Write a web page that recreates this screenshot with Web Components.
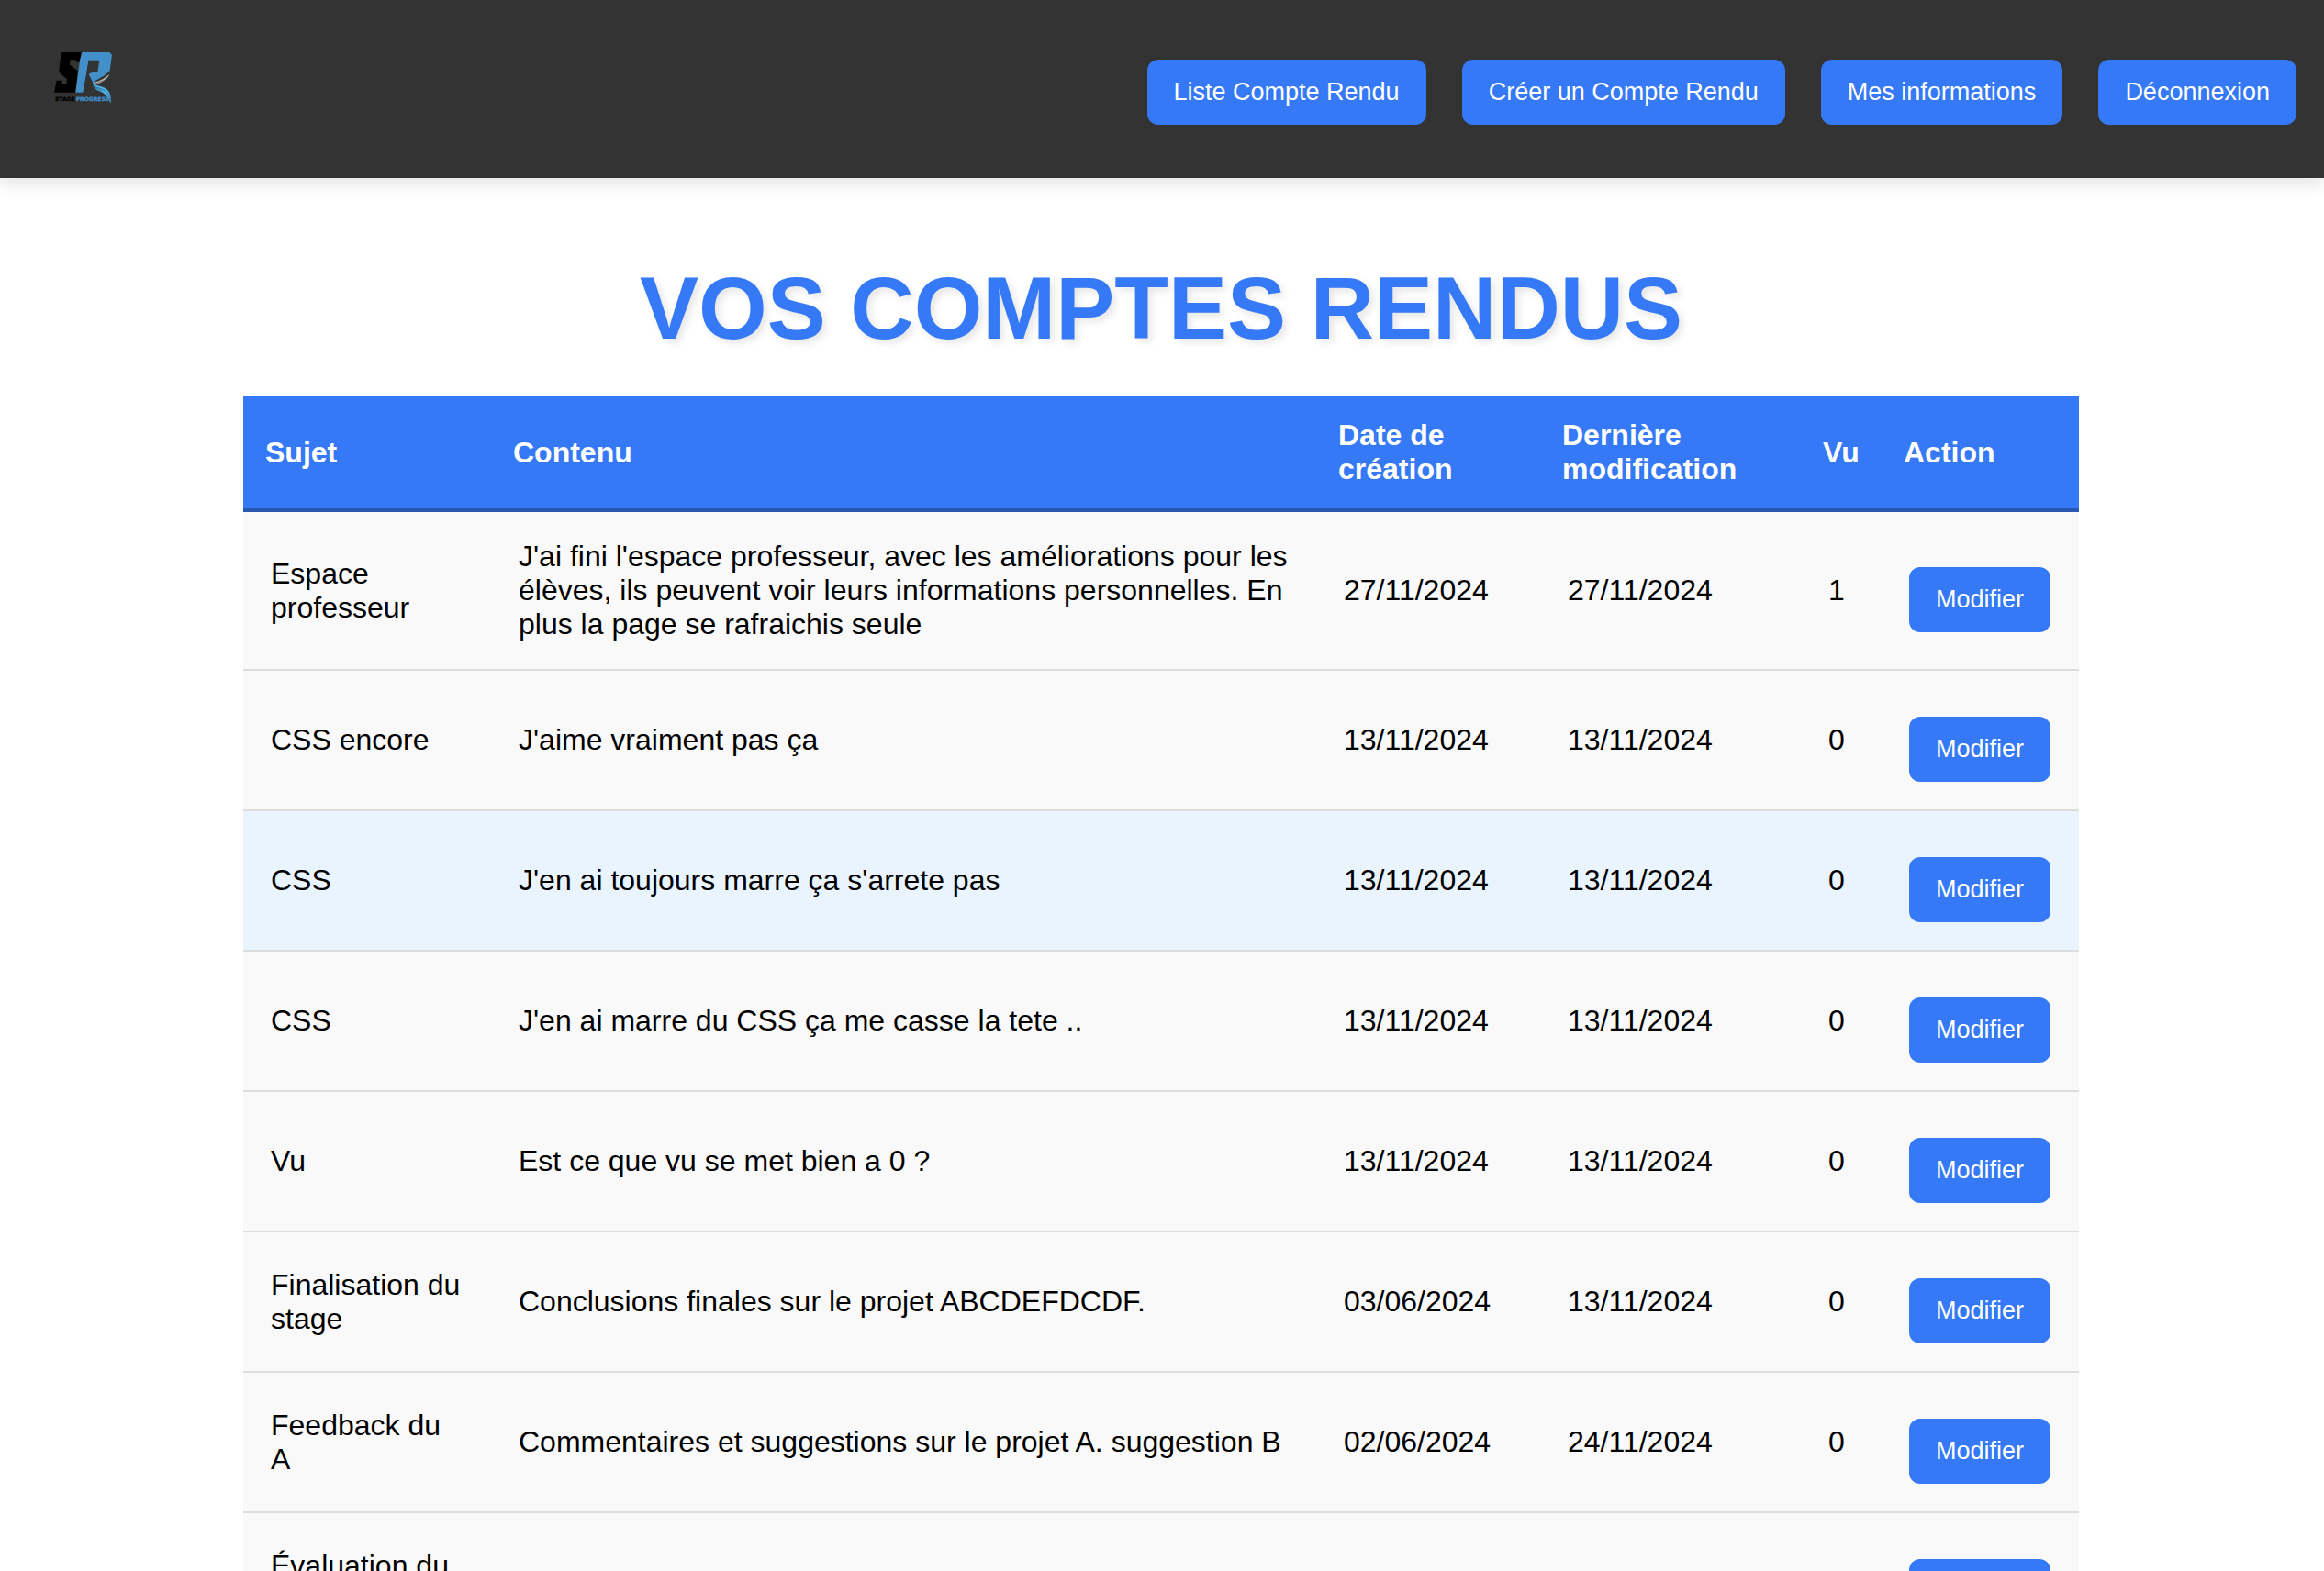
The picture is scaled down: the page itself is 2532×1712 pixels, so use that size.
<!DOCTYPE html>
<html lang="fr">
<head>
<meta charset="utf-8">
<title>Vos comptes rendus</title>
<style>
  body {
    margin: 0;
    background: #fff;
    color: #000;
    font-family: Arial, "Liberation Sans", sans-serif;
    font-size: 32px;
    line-height: 37px;
  }
  main { padding: 88px 32px 40px 30px; }
</style>
</head>
<body>
<site-header>
  <site-logo slot="logo"></site-logo>
  <app-button>Liste Compte Rendu</app-button>
  <app-button>Créer un Compte Rendu</app-button>
  <app-button>Mes informations</app-button>
  <app-button>Déconnexion</app-button>
</site-header>
<main>
  <page-title>VOS COMPTES RENDUS</page-title>
  <report-table></report-table>
</main>

<script>
class ShadowElement extends HTMLElement {
  constructor() {
    super();
    this.attachShadow({ mode: 'open' }).innerHTML = this.constructor.markup;
  }
}

customElements.define('app-button', class extends ShadowElement {
  static markup = `
    <style>
      :host { display: inline-block; vertical-align: top; margin-top: 20px; }
      button {
        display: block; margin: 0; border: 0; padding: 20px 29px;
        border-radius: 12px; background: #3579f6; color: #fff;
        font: 27px/31px Arial, "Liberation Sans", sans-serif;
        white-space: nowrap; cursor: pointer;
      }
    </style>
    <button type="button"><slot></slot></button>`;
});

customElements.define('site-logo', class extends ShadowElement {
  static markup = `
    <style>
      :host { display: block; }
      a { display: block; }
      svg { display: block; width: 64px; height: 58px; overflow: visible; }
      text { font: bold 18px/1 "DejaVu Sans", sans-serif; stroke-width: 1px; }
    </style>
    <a href="#" aria-label="Stage Progress">
      <svg viewBox="54 48 192 174">
        <path fill="#000" d="M83 51H146L140 83H131L129 77Q120 73 110 76L107 91L134 112L126 182H57L65 143H84L83 152Q88 159 97 155L99 138L77 121L73 110L79 57Z"/>
        <path fill="#438fca" d="M148 51H238L246 59L239 111L221 127L188 146L190 157L184 151L170 122L183 116H199L205 77H170L151 182H127L141 78Z"/>
        <path fill="#333" d="M170 77L164 112L177 106L179 82Z"/>
        <path fill="#b9b4b2" d="M237 122Q233 143 190 158L187 150Q222 139 237 122Z"/>
        <path fill="none" stroke="#4a4645" stroke-width="2" d="M236 130Q224 146 188 154"/>
        <path fill="#4cb1e8" d="M183 150Q192 158 211 163Q247 172 241 218Q232 187 205 178Q185 172 183 150Z"/>
        <path fill="none" stroke="#28566f" stroke-width="2" d="M187 158Q194 167 212 171Q235 179 239 207M190 166Q200 172 213 178"/>
        <text x="60" y="210" fill="#000" stroke="#000">STAGE</text>
        <text x="128" y="210" fill="#438fca" stroke="#438fca">PROGRESS</text>
      </svg>
    </a>`;
});

customElements.define('site-header', class extends ShadowElement {
  static markup = `
    <style>
      :host { display: block; }
      header {
        display: flex; justify-content: space-between; align-items: flex-start;
        padding: 45px 30px 58px 58px; background: #333;
        box-shadow: 0 8px 16px rgba(0, 0, 0, .1);
      }
      .logo { padding-top: 11px; }
      nav { display: flex; gap: 39px; }
    </style>
    <header>
      <div class="logo"><slot name="logo"></slot></div>
      <nav><slot></slot></nav>
    </header>`;
});

customElements.define('page-title', class extends ShadowElement {
  static markup = `
    <style>
      :host { display: block; }
      h1 {
        margin: 0 0 42px; color: #3579f6; text-align: center;
        font-size: 96px; line-height: 108px; font-weight: bold;
        text-shadow: 4px 4px 8px rgba(0, 0, 0, .1);
      }
    </style>
    <h1><slot></slot></h1>`;
});

const reports = [
  ['Espace professeur', "J'ai fini l'espace professeur, avec les améliorations pour les élèves, ils peuvent voir leurs informations personnelles. En plus la page se rafraichis seule", '27/11/2024', '27/11/2024', 1],
  ['CSS encore', "J'aime vraiment pas ça", '13/11/2024', '13/11/2024', 0],
  ['CSS', "J'en ai toujours marre ça s'arrete pas", '13/11/2024', '13/11/2024', 0, true],
  ['CSS', "J'en ai marre du CSS ça me casse la tete ..", '13/11/2024', '13/11/2024', 0],
  ['Vu', 'Est ce que vu se met bien a 0 ?', '13/11/2024', '13/11/2024', 0],
  ['Finalisation du stage', 'Conclusions finales sur le projet ABCDEFDCDF.', '03/06/2024', '13/11/2024', 0],
  ['Feedback du A', 'Commentaires et suggestions sur le projet A. suggestion B', '02/06/2024', '24/11/2024', 0],
  ['Évaluation du stage', "Retour sur les performances de l'élève sur le projet A", '01/06/2024', '13/11/2024', 1],
];

customElements.define('report-table', class extends ShadowElement {
  static markup = `
    <style>
      :host { display: block; max-width: 2000px; margin: 0 auto; }
      table { width: 100%; table-layout: fixed; border-collapse: separate; border-spacing: 0; }
      th {
        padding: 24px; text-align: left; font-weight: bold;
        background: #3579f6; color: #fff; border-bottom: 4px solid #2857b0;
      }
      td { padding: 30px; background: #f9f9f9; border-bottom: 2px solid #ddd; }
      tr.active td { background: #e9f4ff; }
      app-button { display: block; }
      .subject { width: 13.5%; }
      .date { width: 12.2%; }
      .edited { width: 14.2%; }
      .seen { width: 4.4%; }
      .action { width: 10.75%; }
    </style>
    <table>
      <colgroup>
        <col class="subject"><col><col class="date"><col class="edited"><col class="seen"><col class="action">
      </colgroup>
      <thead>
        <tr><th>Sujet</th><th>Contenu</th><th>Date de création</th><th>Dernière modification</th><th>Vu</th><th>Action</th></tr>
      </thead>
      <tbody></tbody>
    </table>`;

  connectedCallback() {
    this.shadowRoot.querySelector('tbody').innerHTML = reports.map(
      ([subject, content, created, edited, seen, active]) => `
        <tr${active ? ' class="active"' : ''}>
          <td>${subject}</td><td>${content}</td><td>${created}</td><td>${edited}</td><td>${seen}</td>
          <td><app-button>Modifier</app-button></td>
        </tr>`).join('');
  }
});
</script>
</body>
</html>
